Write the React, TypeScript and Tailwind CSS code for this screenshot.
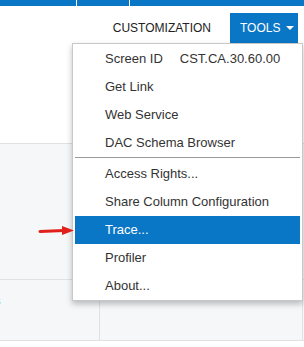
import React from 'react'

const ITEMS_TOP = ['Get Link', 'Web Service', 'DAC Schema Browser']
const ITEMS_BOTTOM = [
  { label: 'Access Rights...' },
  { label: 'Share Column Configuration' },
  { label: 'Trace...', active: true },
  { label: 'Profiler' },
  { label: 'About...' },
]

export default function App() {
  return (
    <div
      className="relative w-[304px] h-[347px] overflow-hidden bg-white text-[#333]"
      style={{ fontFamily: '"Liberation Sans", Arial, sans-serif' }}
    >
      {/* Top bar */}
      <div className="flex h-[6px] bg-[#0a76c6]">
        <div className="w-[77px] border-r border-white" />
        <div className="w-[53px] border-r border-white" />
      </div>

      {/* Header */}
      <div className="flex h-[37px] items-end justify-end pr-[6px]">
        <div className="flex h-[30px] items-center pr-[19px] text-[12px] text-[#222]">CUSTOMIZATION</div>
        <div className="flex h-[30px] w-[68px] items-center gap-[6px] bg-[#0a76c6] pl-[10px] text-[12px] text-white">
          TOOLS
          <span className="h-0 w-0 border-x-[4px] border-t-[4px] border-x-transparent border-t-white" />
        </div>
      </div>

      {/* Body */}
      <div className="h-[100px] bg-white" />
      <div className="h-[197px] border-t border-[#dfe1e5] bg-[#f6f7f9]">
        <div className="h-[135px]" />
        <div className="flex h-[61px] border-t border-[#dfe1e5]">
          <div className="w-[100px] border-r border-[#dfe1e5] pt-[8px]">
            <span className="-ml-[6px] text-[13px] text-[#0a76c6]">s</span>
          </div>
          <div className="w-[203px] border-r border-[#dfe1e5]" />
        </div>
      </div>
      <div className="h-[7px] border-t border-[#dfe1e5] bg-white" />

      {/* Dropdown menu */}
      <div className="absolute left-[72px] top-[43px] w-[231px] border border-[#c8c8c8] bg-white px-[2px] pt-px text-[13px] shadow-[0_3px_6px_rgba(0,0,0,0.25)]">
        <div className="flex h-[28px] items-center pl-[30px]">
          <span>Screen ID</span>
          <span className="ml-[17px]">CST.CA.30.60.00</span>
        </div>
        {ITEMS_TOP.map((t) => (
          <div key={t} className="flex h-[28px] items-center pl-[30px]">{t}</div>
        ))}
        <div className="mb-[2px] h-px bg-[#9a9a9a]" />
        {ITEMS_BOTTOM.map((it) => (
          <div
            key={it.label}
            className={
              it.active
                ? 'flex h-[28px] items-center bg-[#0a76c6] pl-[30px] text-white'
                : 'flex h-[28px] items-center pl-[30px]'
            }
          >
            {it.label}
          </div>
        ))}
      </div>

      {/* Red arrow */}
      <svg className="absolute left-[38px] top-[224px]" width="38" height="14" viewBox="0 0 38 14">
        <line x1="2" y1="7.5" x2="26" y2="6.5" stroke="#e0201b" strokeWidth="3" strokeLinecap="round" />
        <polygon points="24,2 36,6.5 24,11" fill="#e0201b" />
      </svg>
    </div>
  )
}
